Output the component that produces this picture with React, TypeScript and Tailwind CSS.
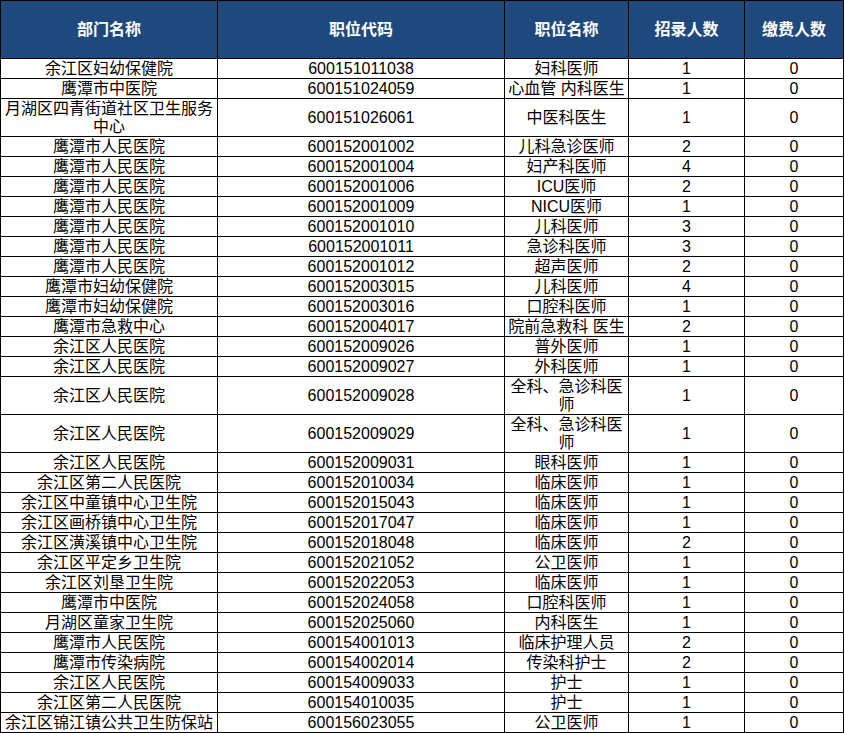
import React from "react";

type Row = {
    dept: string;
    code: string;
    title: string;
    recruit: number;
    paid: number;
    tall?: boolean;
};

const rows: Row[] = [
    { dept: "余江区妇幼保健院", code: "600151011038", title: "妇科医师", recruit: 1, paid: 0 },
    { dept: "鹰潭市中医院", code: "600151024059", title: "心血管 内科医生", recruit: 1, paid: 0 },
    { dept: "月湖区四青街道社区卫生服务中心", code: "600151026061", title: "中医科医生", recruit: 1, paid: 0, tall: true },
    { dept: "鹰潭市人民医院", code: "600152001002", title: "儿科急诊医师", recruit: 2, paid: 0 },
    { dept: "鹰潭市人民医院", code: "600152001004", title: "妇产科医师", recruit: 4, paid: 0 },
    { dept: "鹰潭市人民医院", code: "600152001006", title: "ICU医师", recruit: 2, paid: 0 },
    { dept: "鹰潭市人民医院", code: "600152001009", title: "NICU医师", recruit: 1, paid: 0 },
    { dept: "鹰潭市人民医院", code: "600152001010", title: "儿科医师", recruit: 3, paid: 0 },
    { dept: "鹰潭市人民医院", code: "600152001011", title: "急诊科医师", recruit: 3, paid: 0 },
    { dept: "鹰潭市人民医院", code: "600152001012", title: "超声医师", recruit: 2, paid: 0 },
    { dept: "鹰潭市妇幼保健院", code: "600152003015", title: "儿科医师", recruit: 4, paid: 0 },
    { dept: "鹰潭市妇幼保健院", code: "600152003016", title: "口腔科医师", recruit: 1, paid: 0 },
    { dept: "鹰潭市急救中心", code: "600152004017", title: "院前急救科 医生", recruit: 2, paid: 0 },
    { dept: "余江区人民医院", code: "600152009026", title: "普外医师", recruit: 1, paid: 0 },
    { dept: "余江区人民医院", code: "600152009027", title: "外科医师", recruit: 1, paid: 0 },
    { dept: "余江区人民医院", code: "600152009028", title: "全科、急诊科医师", recruit: 1, paid: 0, tall: true },
    { dept: "余江区人民医院", code: "600152009029", title: "全科、急诊科医师", recruit: 1, paid: 0, tall: true },
    { dept: "余江区人民医院", code: "600152009031", title: "眼科医师", recruit: 1, paid: 0 },
    { dept: "余江区第二人民医院", code: "600152010034", title: "临床医师", recruit: 1, paid: 0 },
    { dept: "余江区中童镇中心卫生院", code: "600152015043", title: "临床医师", recruit: 1, paid: 0 },
    { dept: "余江区画桥镇中心卫生院", code: "600152017047", title: "临床医师", recruit: 1, paid: 0 },
    { dept: "余江区潢溪镇中心卫生院", code: "600152018048", title: "临床医师", recruit: 2, paid: 0 },
    { dept: "余江区平定乡卫生院", code: "600152021052", title: "公卫医师", recruit: 1, paid: 0 },
    { dept: "余江区刘垦卫生院", code: "600152022053", title: "临床医师", recruit: 1, paid: 0 },
    { dept: "鹰潭市中医院", code: "600152024058", title: "口腔科医师", recruit: 1, paid: 0 },
    { dept: "月湖区童家卫生院", code: "600152025060", title: "内科医生", recruit: 1, paid: 0 },
    { dept: "鹰潭市人民医院", code: "600154001013", title: "临床护理人员", recruit: 2, paid: 0 },
    { dept: "鹰潭市传染病院", code: "600154002014", title: "传染科护士", recruit: 2, paid: 0 },
    { dept: "余江区人民医院", code: "600154009033", title: "护士", recruit: 1, paid: 0 },
    { dept: "余江区第二人民医院", code: "600154010035", title: "护士", recruit: 1, paid: 0 },
    { dept: "余江区锦江镇公共卫生防保站", code: "600156023055", title: "公卫医师", recruit: 1, paid: 0 },
];

const headers = ["部门名称", "职位代码", "职位名称", "招录人数", "缴费人数"];

function Cell({ children, tall }: { children: React.ReactNode; tall?: boolean }) {
    return (
        <div
            className={`flex items-center justify-center text-center border-r border-b border-black overflow-hidden ${
                tall ? "h-[38px] leading-[18px]" : "h-[20px] leading-[19px]"
            }`}
        >
            <span className="block w-full">{children}</span>
        </div>
    );
}

export default function App() {
    return (
        <div className="w-[844px] bg-white text-[16px] text-black font-['Liberation_Sans','Noto_Sans_CJK_SC',sans-serif]">
            <div className="grid grid-cols-[217px_287px_124px_116px_99px] border-l border-t border-black">
                {headers.map((h) => (
                    <div
                        key={h}
                        className="h-[58px] flex items-center justify-center bg-[#1f497d] text-white font-bold border-r border-b border-black"
                    >
                        {h}
                    </div>
                ))}

                {rows.map((r, i) => (
                    <React.Fragment key={i}>
                        <Cell tall={r.tall}>{r.dept}</Cell>
                        <Cell tall={r.tall}>{r.code}</Cell>
                        <Cell tall={r.tall}>{r.title}</Cell>
                        <Cell tall={r.tall}>{r.recruit}</Cell>
                        <Cell tall={r.tall}>{r.paid}</Cell>
                    </React.Fragment>
                ))}
            </div>
        </div>
    );
}
